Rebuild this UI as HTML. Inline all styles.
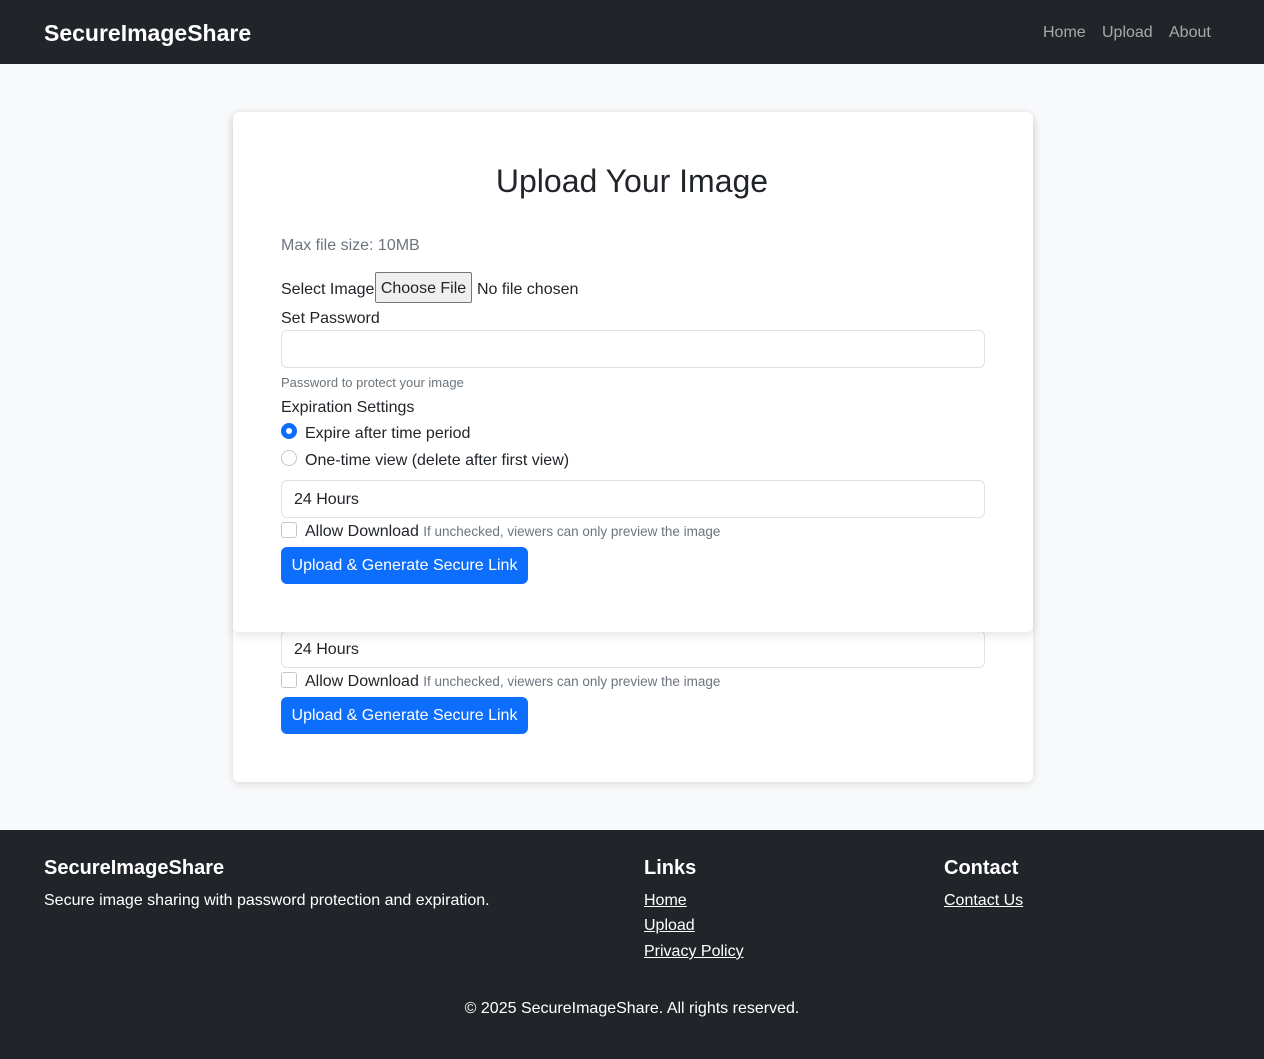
<!DOCTYPE html><html><head><style>
*{box-sizing:border-box;margin:0;padding:0}
body{width:1264px;height:1059px;background:#f8f9fa;font-family:"Liberation Sans",sans-serif;color:#212529;font-size:16px;position:relative;overflow:hidden}
.a{position:absolute;white-space:nowrap}
nav{position:absolute;left:0;top:0;width:1264px;height:64px;background:#212529}
.card{position:absolute;left:233px;width:800px;background:#fff;border-radius:6px;box-shadow:0 2px 8px rgba(0,0,0,.12)}
.inp{position:absolute;left:281px;width:704px;height:38px;border:1px solid #dee2e6;border-radius:6px;background:#fff;padding:0 12px;line-height:38px}
.btn{position:absolute;left:281px;width:247px;height:37px;background:#0d6efd;color:#fff;border-radius:6px;line-height:37px;text-align:center}
.cb{position:absolute;left:281px;width:16px;height:16px;border:1px solid #c4c8cc;border-radius:3px;background:#fff}
.sm{font-size:14px;color:#6c757d}
footer{position:absolute;left:0;top:830px;width:1264px;height:229px;background:#212529;color:#fff}
footer u{text-decoration:underline}
</style></head><body>
<nav>
<div class="a" style="left:44px;top:20px;color:#fff;font-size:23px;font-weight:bold">SecureImageShare</div>
<div class="a" style="left:1043px;top:24px;color:rgba(255,255,255,.6)">Home</div>
<div class="a" style="left:1102px;top:24px;color:rgba(255,255,255,.6)">Upload</div>
<div class="a" style="left:1169px;top:24px;color:rgba(255,255,255,.6)">About</div>
</nav>
<div class="card" style="top:112px;height:670px"></div>
<div class="inp" style="top:630px">24 Hours</div>
<div class="cb" style="top:672px"></div>
<div class="a" style="left:305px;top:673px">Allow Download <span class="sm" style="font-size:13.5px">If unchecked, viewers can only preview the image</span></div>
<div class="btn" style="top:697px">Upload &amp; Generate Secure Link</div>
<div class="card" style="top:112px;height:520px;box-shadow:0 4px 10px rgba(0,0,0,.1)"></div>
<div class="a" style="left:0;width:1264px;text-align:center;top:163px;font-size:32px;font-weight:500;color:#212529">Upload Your Image</div>
<div class="a" style="left:281px;top:237px;color:#6c757d">Max file size: 10MB</div>
<div class="a" style="left:281px;top:281px">Select Image</div>
<div class="a" style="left:375px;top:272px;width:97px;height:31px;border:1px solid #767676;border-radius:2px;background:#efefef;text-align:center;line-height:31px">Choose File</div>
<div class="a" style="left:477px;top:281px">No file chosen</div>
<div class="a" style="left:281px;top:310px">Set Password</div>
<div class="inp" style="top:330px"></div>
<div class="a sm" style="left:281px;top:375px;font-size:13px">Password to protect your image</div>
<div class="a" style="left:281px;top:399px">Expiration Settings</div>
<div class="a" style="left:281px;top:423px;width:16px;height:16px;border-radius:50%;background:#0d6efd"><div style="position:absolute;left:5px;top:5px;width:6px;height:6px;border-radius:50%;background:#fff"></div></div>
<div class="a" style="left:305px;top:425px">Expire after time period</div>
<div class="a" style="left:281px;top:450px;width:16px;height:16px;border-radius:50%;border:1px solid #c4c8cc"></div>
<div class="a" style="left:305px;top:452px">One-time view (delete after first view)</div>
<div class="inp" style="top:480px">24 Hours</div>
<div class="cb" style="top:522px"></div>
<div class="a" style="left:305px;top:523px">Allow Download <span class="sm" style="font-size:13.5px">If unchecked, viewers can only preview the image</span></div>
<div class="btn" style="top:547px">Upload &amp; Generate Secure Link</div>
<footer>
<div class="a" style="left:44px;top:27px;font-size:20px;font-weight:bold">SecureImageShare</div>
<div class="a" style="left:44px;top:62px">Secure image sharing with password protection and expiration.</div>
<div class="a" style="left:644px;top:27px;font-size:20px;font-weight:bold">Links</div>
<div class="a" style="left:644px;top:62px"><u>Home</u></div>
<div class="a" style="left:644px;top:87px"><u>Upload</u></div>
<div class="a" style="left:644px;top:113px"><u>Privacy Policy</u></div>
<div class="a" style="left:944px;top:27px;font-size:20px;font-weight:bold">Contact</div>
<div class="a" style="left:944px;top:62px"><u>Contact Us</u></div>
<div class="a" style="left:0;width:1264px;text-align:center;top:170px">© 2025 SecureImageShare. All rights reserved.</div>
</footer>
</body></html>
